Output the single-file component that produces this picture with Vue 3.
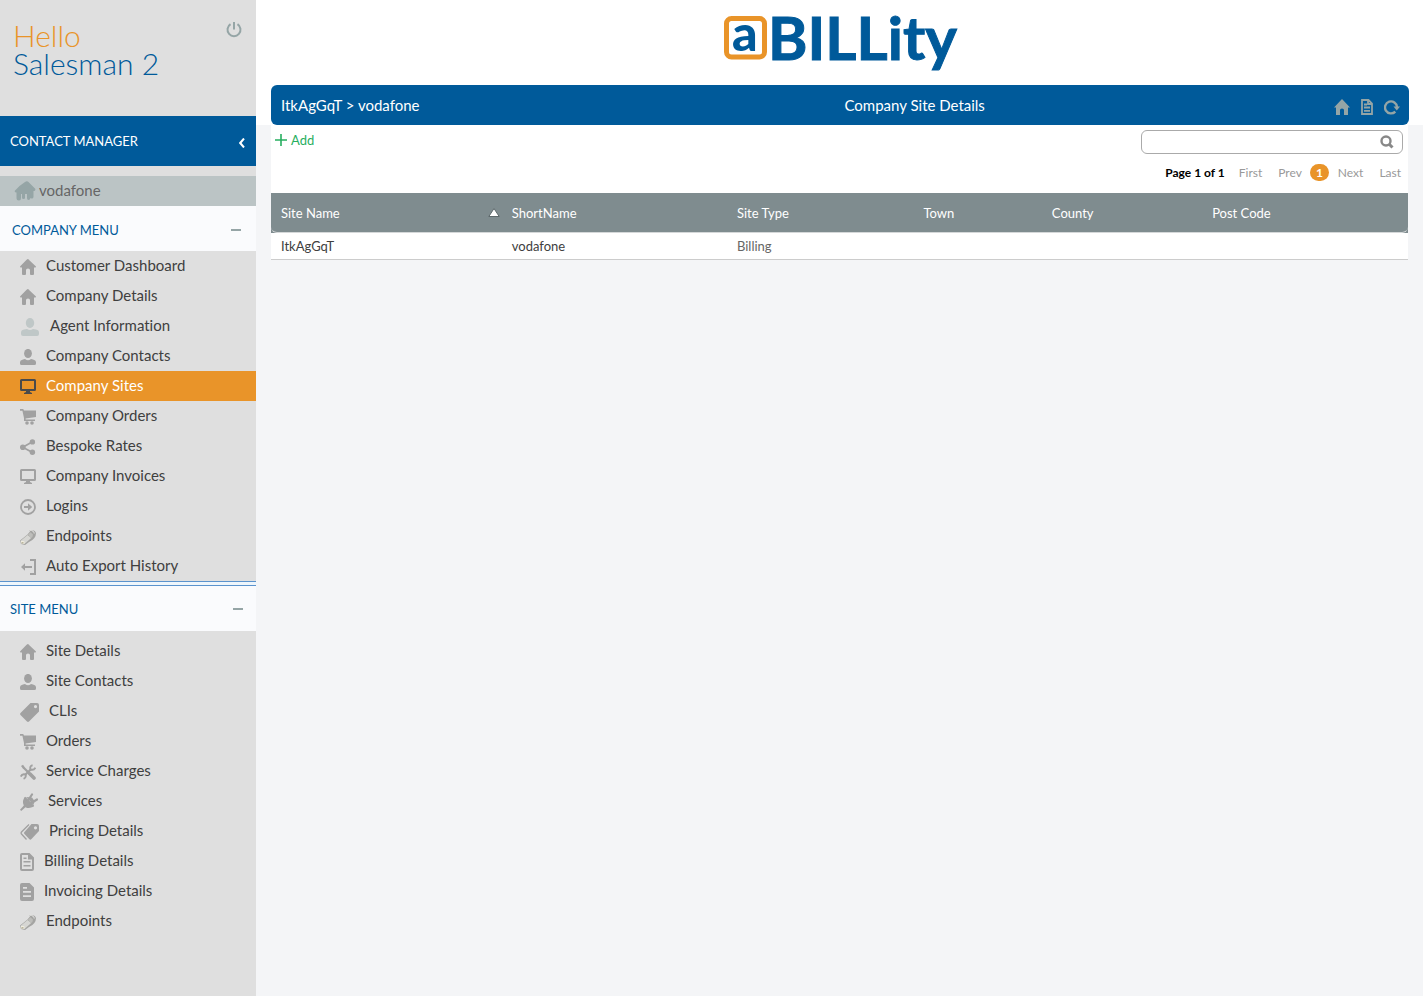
<script setup>
import { ref } from 'vue'

const icons = {
  home: { w: 16, h: 16, d: '<path d="M8 0 16 7.4Q16 8.6 14.4 8.6H14V15Q14 16 13 16H11Q10 16 10 15V11Q10 9.4 8 9.4T6 11V15Q6 16 5 16H3Q2 16 2 15V8.600H1.600Q0 8.600 0 7.400L6.600 .8Q8 -.6 9.400 .8Z"/>' },
  agent: { w: 20, h: 18, d: '<ellipse cx="10" cy="5" rx="4.200" ry="5"/><path d="M1 14.500Q1 12 4 11.500Q6 11 7 11Q10 13.200 13 11Q14 11 16 11.500Q19 12 19 14.500V16Q19 18 17 18H3Q1 18 1 16Z"/>' },
  user: { w: 16, h: 16, d: '<ellipse cx="8" cy="4.500" rx="3.900" ry="4.600"/><path d="M0 13Q0 11 3 10.400L5 10Q8 12.400 11 10L13 10.400Q16 11 16 13V14.500Q16 16 14.500 16H1.500Q0 16 0 14.500Z"/>' },
  screen: { w: 16, h: 16, d: '<path fill-rule="evenodd" d="M1.500 0H14.500Q16 0 16 1.500V10.500Q16 12 14.500 12H10V13L12 14V15H4V14L6 13V12H1.500Q0 12 0 10.500V1.500Q0 0 1.500 0ZM2 2V10H14V2Z"/>' },
  cart: { w: 16, h: 16, d: '<path d="M0 0H3.200L4 1.600H16V8L5.600 9.400V10.400H15V12H4V9L2.400 1.800H0Z"/><circle cx="7" cy="14" r="1.800"/><circle cx="12" cy="14" r="1.800"/>' },
  share: { w: 16, h: 16, d: '<path d="M12.500 2.800 2.800 8.200 12.500 13.400" fill="none" stroke="currentColor" stroke-width="1.700"/><circle cx="12.400" cy="2.900" r="2.700"/><circle cx="2.800" cy="8.200" r="2.800"/><circle cx="12.400" cy="13.300" r="2.700"/>' },
  login: { w: 16, h: 16, d: '<circle cx="8" cy="8" r="7" fill="none" stroke="currentColor" stroke-width="1.800"/><path d="M4 7H8V4.200L12.200 8 8 11.800V9H4Z"/>' },
  plugcable: { w: 16, h: 16, d: '<path d="M0 11.500 7.500 5.500 10 2.500 9.500 1Q15 .5 16 4Q16 10 9 13L5 16 1 15Z" fill="#a4a4a2"/><path d="M.7 11.700 7.600 6 11.200 9 4.700 14.700 1 14.300Z" fill="#d6d6d3"/><path d="M8 5.500 10.500 3.200 13 5.500Q13 8 10.800 9.200Z" fill="#bdbdba"/><path d="M9.700 1.100Q14 1.500 14.200 4.500" fill="none" stroke="#e8e8e6" stroke-width="1"/><path d="M1 12 4.300 12.300 4.500 15 1.300 14.500Z" fill="#f2efe0"/><path d="M1.500 13.200H3.500V14.500H1.500Z" fill="#aaa58d"/>' },
  export: { w: 16, h: 16, d: '<path d="M1 8 5 4.300V7.100H12V9H5V11.700Z"/><path d="M10 1H15V15H10" fill="none" stroke="currentColor" stroke-width="2"/>' },
  tag: { w: 19, h: 19, d: '<path fill-rule="evenodd" d="M10.500 0H17Q19 0 19 2V8.500L9 18.500Q8 19.300 7 18.500L.5 12Q-.3 11 .5 10ZM15.500 2A1.600 1.600 0 1 0 15.500 5.200A1.600 1.600 0 1 0 15.500 2Z"/>' },
  tools: { w: 16, h: 16, d: '<path d="M4 4 12.500 12.500" stroke="currentColor" stroke-width="2.200"/><path d="M9.800 9.800 14 14" stroke="currentColor" stroke-width="3.600" stroke-linecap="round"/><path d="M1 2 3 .8 5 3.600 4.500 5 3.200 5Z"/><path d="M11.200 5 4.800 11.200" stroke="currentColor" stroke-width="2.200"/><path d="M12.600 1.300Q9.500 2 10.500 5.500Q14 6.600 15.400 3.600M3.600 14.800Q6.600 13.500 5.500 10.500Q2 9.400 .8 12.600" fill="none" stroke="currentColor" stroke-width="1.900"/>' },
  plug: { w: 18, h: 18, d: '<path d="M5 4 14 13Q9.500 16.500 5.500 14.200L1.200 18 0 16.800 3.800 12.500Q1.500 8 5 4Z"/><path d="M4.500 4.500 13.500 13.500" stroke="currentColor" stroke-width="1.800"/><path d="M8 7.500 12 1.500M10.500 10.500 17 6.500" stroke="currentColor" stroke-width="2.200" stroke-linecap="round"/><path d="M6 4 12 4.500 14.500 8 13.500 12Z"/>' },
  tags: { w: 19, h: 16, d: '<path fill-rule="evenodd" d="M11.500 0H17Q19 0 19 2V7L11.500 15Q10.300 16.300 9.200 15L4.500 10Q3.500 9 4.500 8ZM15.500 2.200A1.600 1.600 0 1 0 15.500 5.400A1.600 1.600 0 1 0 15.500 2.200Z"/><path d="M9 .5 1.500 8Q.7 9 1.500 10L6.500 15.500" fill="none" stroke="currentColor" stroke-width="1.300"/>' },
  doc: { w: 14, h: 18, d: '<path fill-rule="evenodd" d="M2 0H9.500L14 4.500V16Q14 18 12 18H2Q0 18 0 16V2Q0 0 2 0ZM2 2V16H12V6.500H8V2Z"/><path d="M3.500 8H10.500V9.500H3.500ZM3.500 12H10.500V13.500H3.500ZM3.500 4.500H6.500V6H3.500Z"/>' },
  docfill: { w: 14, h: 18, d: '<path fill-rule="evenodd" d="M2 0H9.500L14 4.500V16Q14 18 12 18H2Q0 18 0 16V2Q0 0 2 0ZM3 4V5.700H7V4ZM3 8V9.700H11V8ZM3 12.300V14H11V12.300Z"/>' }
}

const companyMenu = [
  ['home', 'Customer Dashboard'],
  ['home', 'Company Details'],
  ['agent', 'Agent Information'],
  ['user', 'Company Contacts'],
  ['screen', 'Company Sites'],
  ['cart', 'Company Orders'],
  ['share', 'Bespoke Rates'],
  ['screen', 'Company Invoices'],
  ['login', 'Logins'],
  ['plugcable', 'Endpoints'],
  ['export', 'Auto Export History']
]
const siteMenu = [
  ['home', 'Site Details'],
  ['user', 'Site Contacts'],
  ['tag', 'CLIs'],
  ['cart', 'Orders'],
  ['tools', 'Service Charges'],
  ['plug', 'Services'],
  ['tags', 'Pricing Details'],
  ['doc', 'Billing Details'],
  ['docfill', 'Invoicing Details'],
  ['plugcable', 'Endpoints']
]
const active = ref('Company Sites')
const query = ref('')
</script>

<template>
  <div class="page">
    <aside class="sidebar">
      <div class="greeting">
        <div class="hello"><span class="hi">Hello</span><span>Salesman 2</span></div>
        <button class="power" aria-label="Log out">
          <svg width="16" height="16" viewBox="0 0 16 16" fill="none" stroke="currentColor" stroke-width="2"><path d="M4.500 2.200A6.500 6.500 0 1 0 11.500 2.200M8 0V7.500" /></svg>
        </button>
      </div>
      <button class="manager">
        <span>CONTACT MANAGER</span>
        <svg width="6" height="10" viewBox="0 0 6 10" fill="none" stroke="currentColor" stroke-width="2"><path d="M5 .5 1.200 5 5 9.500" /></svg>
      </button>
      <a href="#" class="customer">
        <svg width="22" height="20" viewBox="0 0 22 20" fill="currentColor"><path d="M11 1Q13 -.3 14.500 1L21 7.500Q22 9 20.500 10H19.500V16Q19 18 17.500 17.500L16.500 17Q16 19 14.500 19Q13 19 13 17V13H11V17Q11 18 9.500 18Q8 18 8 16.500V13H7V17Q7 19.500 5 19.500Q2.500 19.500 2.500 17V11.500Q0 11.500 1 9.500L5.500 5Z" /></svg>
        <span>vodafone</span>
      </a>
      <button class="section company"><span>COMPANY MENU</span><i class="minus"></i></button>
      <nav aria-label="Company menu">
        <a v-for="[icon, label] in companyMenu" :key="label" href="#" class="item" :class="[icon, { active: active === label }]" @click.prevent="active = label">
          <svg :width="icons[icon].w" :height="icons[icon].h" :viewBox="`0 0 ${icons[icon].w} ${icons[icon].h}`" fill="currentColor" v-html="icons[icon].d"></svg>
          <span>{{ label }}</span>
        </a>
      </nav>
      <div class="rule"></div>
      <button class="section site"><span>SITE MENU</span><i class="minus"></i></button>
      <nav class="site-nav" aria-label="Site menu">
        <a v-for="[icon, label] in siteMenu" :key="label" href="#" class="item" @click.prevent>
          <svg :width="icons[icon].w" :height="icons[icon].h" :viewBox="`0 0 ${icons[icon].w} ${icons[icon].h}`" fill="currentColor" v-html="icons[icon].d"></svg>
          <span>{{ label }}</span>
        </a>
      </nav>
    </aside>

    <main class="main">
      <header class="top">
        <div class="logo">
          <svg width="232" height="66" viewBox="0 0 232 66" role="img" aria-label="aBILLity">
            <rect x="2.500" y="7.500" width="38" height="38.500" rx="5" fill="none" stroke="#e99429" stroke-width="5" />
            <text x="8" y="40" class="logo-a">a</text>
            <text x="44" y="49" class="logo-word">BILLity</text>
          </svg>
        </div>
        <div class="bar">
          <span class="crumb">ItkAgGqT &gt; vodafone</span>
          <h1>Company Site Details</h1>
          <div class="tools">
            <button aria-label="Home"><svg width="16" height="16" viewBox="0 0 16 16" fill="currentColor"><path d="M8 0 16 8.500H14V16H10V11Q10 9.500 8 9.500T6 11V16H2V8.500H0Z" /></svg></button>
            <button aria-label="Document"><svg width="12" height="16" viewBox="0 0 12 16" fill="none" stroke="currentColor" stroke-width="1.800"><path d="M1 1H7.500L11 4.500V15H1ZM3 5.500H6M3 8.500H9M3 11.800H9M7 1V5H11" /></svg></button>
            <button aria-label="Refresh"><svg width="16" height="16" viewBox="0 0 16 16"><path d="M11.300 12.600A6 6 0 1 1 13 8" fill="none" stroke="currentColor" stroke-width="2.400" /><path d="M9.500 7.500H16L12.800 11.500Z" fill="currentColor" /></svg></button>
          </div>
        </div>
      </header>

      <section class="panel">
        <div class="actions">
          <button class="add">
            <svg width="12" height="12" viewBox="0 0 12 12" stroke="currentColor" stroke-width="1.600"><path d="M6 0V12M0 6H12" /></svg>
            <span>Add</span>
          </button>
          <div class="right">
            <div class="search">
              <input v-model="query" type="text" aria-label="Search sites" />
              <button aria-label="Search"><svg width="14" height="14" viewBox="0 0 14 14" fill="none" stroke="currentColor"><circle cx="6" cy="6" r="4.500" stroke-width="2.400" /><path d="M9 9 12.500 12.500" stroke-width="3" /></svg></button>
            </div>
            <nav class="pager" aria-label="Pages">
              <strong>Page 1 of 1</strong>
              <a href="#">First</a>
              <a href="#">Prev</a>
              <a href="#" class="current" aria-current="page">1</a>
              <a href="#">Next</a>
              <a href="#">Last</a>
            </nav>
          </div>
        </div>
        <table>
          <colgroup><col class="c1" /><col class="c2" /><col class="c3" /><col class="c4" /><col class="c5" /><col class="c6" /></colgroup>
          <thead>
            <tr>
              <th aria-sort="ascending">
                <div class="sorted"><span>Site Name</span><svg width="12" height="9" viewBox="0 0 12 9"><path d="M6 .5 11.200 8.500H.8Z" fill="#fff" stroke="#5d696b" /></svg></div>
              </th>
              <th>ShortName</th><th>Site Type</th><th>Town</th><th>County</th><th>Post Code</th>
            </tr>
          </thead>
          <tbody>
            <tr><td>ItkAgGqT</td><td>vodafone</td><td class="muted">Billing</td><td></td><td></td><td></td></tr>
          </tbody>
        </table>
      </section>
    </main>
  </div>
</template>

<style>
body { margin: 0; background: #f4f5f7; }
</style>

<style scoped>
.page { display: flex; min-height: 100vh; font-family: Lato, "Liberation Sans", sans-serif; font-size: 15px; font-variant-ligatures: none; color: #404040; background: #f4f5f7; }
.page * { box-sizing: border-box; }
button { border: 0; padding: 0; margin: 0; background: none; font: inherit; font-variant-ligatures: none; color: inherit; cursor: pointer; }
a { color: inherit; text-decoration: none; }
svg { display: block; flex: none; }
.sidebar { width: 256px; flex: none; background: #dfdfdf; }
.greeting { display: flex; justify-content: space-between; align-items: flex-start; height: 116px; padding: 21px 14px 0 13px; }
.hello { display: flex; flex-direction: column; font-size: 30px; line-height: 28px; font-weight: 300; color: #005a9a; }
.hi { color: #e99429; }
.power { margin-top: 1px; color: #95a5a6; }
.manager { display: flex; justify-content: space-between; align-items: center; width: 100%; height: 50px; padding: 0 11px 0 10px; background: #005a9a; color: #fff; font-size: 13px; }
.manager svg { margin-top: 3px; }
.customer { display: flex; align-items: center; gap: 3px; height: 30px; margin-top: 10px; padding-left: 14px; background: #bbc4c5; color: #666; }
.customer span, .item span { padding-bottom: 2px; }
.customer svg { color: #95a5a6; }
.section { display: flex; justify-content: space-between; align-items: center; width: 100%; height: 45px; background: #fafbfd; color: #005a9a; font-size: 13px; }
.company { padding: 3px 15px 0 12px; }
.site { padding: 0 13px 0 10px; }
.minus { width: 10px; height: 2px; background: #95a5a6; }
.item { display: flex; align-items: center; gap: 10px; height: 30px; padding-left: 20px; }
.item svg { margin-top: 2px; color: #a1a1a1; }
.item.agent svg { color: #bfc7c7; }
.item.active { background: #e99429; color: #fff; }
.item.active svg { color: #4a4a4a; }
.rule { height: 5px; border-top: 1px solid #5b93cd; border-bottom: 1px solid #5b93cd; background: #eef6fc; }
.site-nav { padding-top: 5px; }
.main { flex: 1; min-width: 0; }
.top { background: #fff; padding: 0 14px 0 15px; }
.logo { display: flex; justify-content: center; padding-top: 11px; height: 85px; }
.logo svg { overflow: visible; }
.logo-a { font: 900 50px Lato, sans-serif; fill: #005a9a; }
.logo-word { font: 700 60px Lato, sans-serif; fill: #005a9a; stroke: #005a9a; stroke-width: 1px; }
.bar { display: grid; grid-template-columns: 50% 1fr auto; align-items: center; height: 40px; padding: 0 9px 0 10px; border-radius: 6px; background: #005a9a; color: #fff; }
h1 { margin: 0; padding-left: 4px; font-size: 15px; font-weight: 400; }
.tools { display: flex; justify-content: flex-end; align-items: center; gap: 11px; padding-top: 4px; color: #95a5a6; }
.panel { margin: 0 15px; background: #fff; }
.actions { display: flex; justify-content: space-between; align-items: flex-start; height: 68px; padding: 5px 5px 0 4px; }
.add { display: flex; align-items: center; gap: 4px; height: 20px; font-size: 13px; color: #27ae60; }
.right { width: 262px; }
.search { display: flex; align-items: center; height: 24px; padding-right: 8px; border: 1px solid #aaa; border-radius: 6px; background: #fff; }
.search input { flex: 1; min-width: 0; height: 20px; border: 0; padding: 0 8px; background: none; font: inherit; outline: 0; }
.search button { color: #888; }
.pager { display: flex; align-items: center; justify-content: flex-end; height: 20px; margin-top: 8px; padding-right: 2px; font-size: 12px; color: #999; }
.pager strong { color: #000; margin-right: 14px; }
.pager a { margin-right: 16px; }
.pager a:nth-of-type(2) { margin-right: 8px; }
.pager a:last-child { margin-right: 0; }
.pager .current { width: 19px; height: 17px; margin-right: 9px; border-radius: 9px; background: #e99429; color: #fff; font-weight: 700; line-height: 17px; text-align: center; }
table { width: 100%; table-layout: fixed; border-collapse: separate; border-spacing: 0; background: #7f8c8f; font-size: 13px; }
.c1 { width: 20.300%; }
.c2 { width: 19.800%; }
.c3 { width: 16.400%; }
.c4 { width: 11.300%; }
.c5 { width: 14.100%; }
.c6 { width: 18.100%; }
th { height: 40px; padding: 0 10px; border-bottom: 1px solid #d5d8d9; color: #fff; font-weight: 400; text-align: left; }
th:first-child { padding-right: 2px; border-bottom-left-radius: 6px; }
th:last-child { border-bottom-right-radius: 6px; }
.sorted { display: flex; justify-content: space-between; align-items: center; }
td { height: 27px; padding: 0 10px; border-bottom: 1px solid #ccc; background: #fff; }
.muted { color: #666; }
</style>
